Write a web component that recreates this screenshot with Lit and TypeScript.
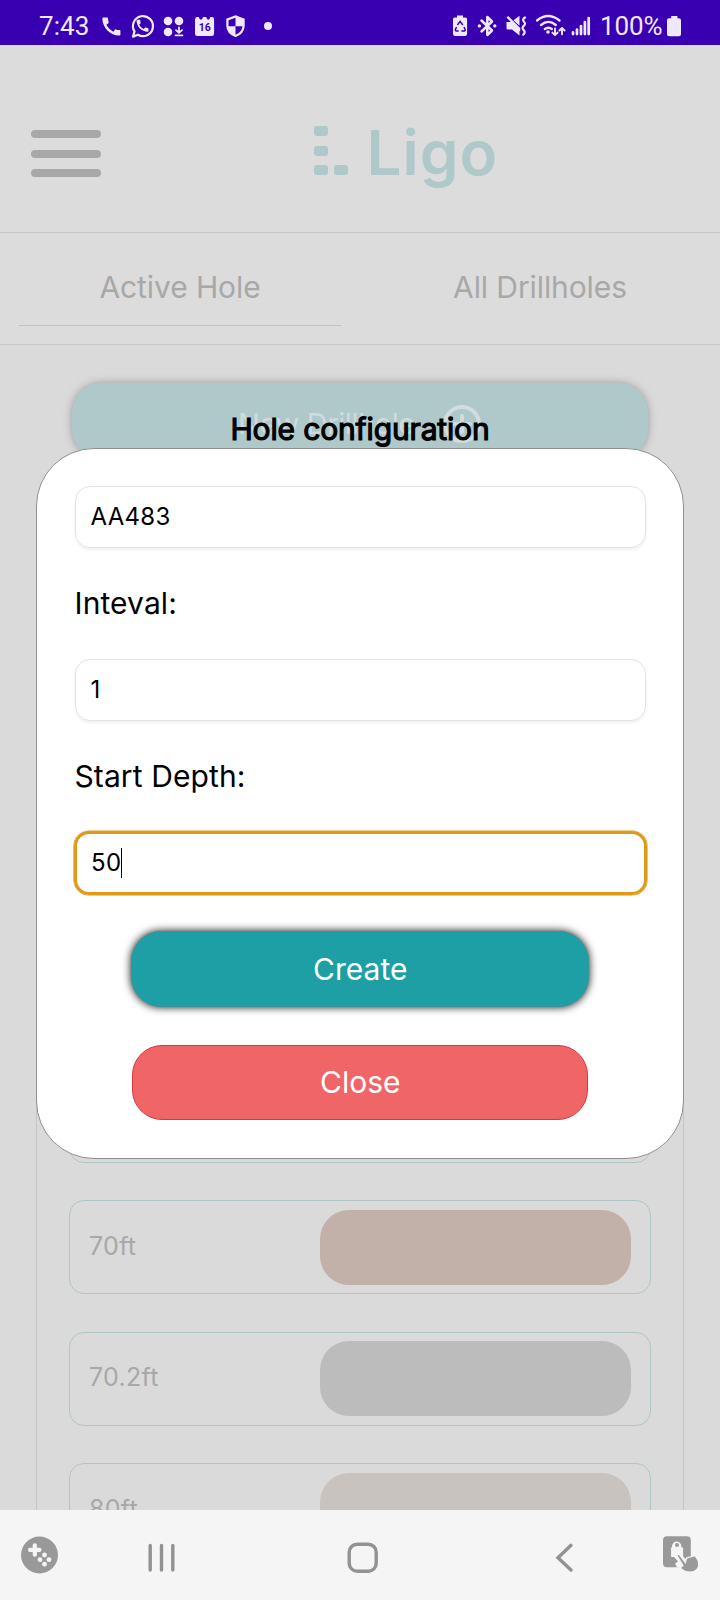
import { LitElement, html, css, svg } from "lit";
import { customElement } from "lit/decorators.js";

const PHONE =
  "M20.01 15.38c-1.23 0-2.42-.2-3.53-.56-.35-.12-.74-.03-1.01.24l-1.57 1.97c-2.83-1.35-5.48-3.9-6.89-6.83l1.95-1.66c.27-.28.35-.67.24-1.02-.37-1.11-.56-2.3-.56-3.53 0-.54-.45-.99-.99-.99H4.19C3.65 3 3 3.24 3 3.99 3 13.28 10.73 21 20.01 21c.71 0 .99-.63.99-1.18v-3.45c0-.54-.45-.99-.99-.99z";

// Every icon is drawn in the coordinates of the bar that holds it.
const glyph = (x: number, width: number, height: number, body: unknown) => html`
  <svg width=${width} height=${height} viewBox="${x} 0 ${width} ${height}">${body}</svg>
`;

@customElement("status-bar")
export class StatusBar extends LitElement {
  static styles = css`
    :host { display: flex; height: 45px; background: #3800b0; color: #f0e8ff; overflow: hidden; }
    svg { display: block; flex: none; fill: #f0e8ff; }
    .line { fill: none; stroke: #f0e8ff; stroke-linecap: round; stroke-linejoin: round; }
    .cut { fill: #3800b0; }
    .cutline { fill: none; stroke: #3800b0; }
    .time, .percent { font: 400 26px/52px Roboto, sans-serif; white-space: nowrap; flex: none; }
    .time { width: 58px; padding-left: 39px; letter-spacing: 0.1px; }
    .percent { width: 66px; padding-left: 2px; letter-spacing: -0.1px; }
    .date { font: 700 10.5px Roboto, sans-serif; fill: #3800b0; }
    .gap { flex: 1; }
  `;
  render() {
    return html`
      <span class="time">7:43</span>
      ${glyph(97, 31, 45, svg`<path transform="translate(99.4 14.6)" d=${PHONE} />`)}
      ${glyph(128, 30, 45, svg`
        <path class="line" stroke-width="2.2" d="M133 36.6l1.5-5.2a10 10 0 1 1 3.4 3.3z" />
        <path transform="translate(134.6 17.8) scale(.66)" d=${PHONE} />`)}
      ${glyph(158, 30, 45, svg`
        <circle cx="168" cy="21" r="4.3" /><circle cx="179" cy="21" r="4.3" /><circle cx="168" cy="32" r="4.3" />
        <path class="line" stroke-width="1.8" d="M179 27.5v5.2m-3-2.6l3 2.8 3-2.8M175.5 35.3h7" />`)}
      ${glyph(188, 34, 45, svg`
        <path d="M195 19.5q0-2.4 2.4-2.4h1.4q.6 2.6 2.1 2.6t2.1-2.6h3.2q.6 2.6 2.1 2.6t2.1-2.6h1.3q2.4 0 2.4 2.4v14.2q0 2.4-2.4 2.4h-14.3q-2.4 0-2.4-2.4z" />
        <text class="date" x="204.8" y="31.3" text-anchor="middle">16</text>`)}
      ${glyph(222, 35, 45, svg`
        <path d="M235.5 15.2l9.2 3.5v7q0 7.800-9.200 11.500-9.200-3.700-9.200-11.500v-7z" />
        <path class="cut" d="M235.500 17.800v8.400h-7v-6zM235.500 26.200h7q-.5 5.800-7 8.600z" />`)}
      ${glyph(257, 22, 45, svg`<circle cx="268" cy="26" r="4" />`)}
      <span class="gap"></span>
      ${glyph(448, 26, 45, svg`
        <path d="M457 15.500h6v2h2.500q1.600 0 1.600 1.600v15q0 1.800-1.800 1.800h-10.500q-1.800 0-1.800-1.800v-15q0-1.600 1.600-1.600h2.400z" />
        <path class="cutline" stroke-width="1.500" d="M457.400 25l2.700-3.600 2.700 3.600M464 27l1.200 2.600q.1 1.300-1.500 1.400h-2.300M458.600 31h-2q-1.600-.3-1.200-1.600l1.200-2.200" />`)}
      ${glyph(474, 26, 45, svg`
        <path class="line" stroke-width="2.500" d="M481.500 20.500l10.500 10-4.700 4.500v-18l4.700 4.500-10.500 10" />
        <circle cx="479.400" cy="25.900" r="1.700" /><circle cx="494.800" cy="25.900" r="1.700" />`)}
      ${glyph(500, 30, 45, svg`
        <path d="M506.500 22h4.500l8.500 8.500v5.100l-7.500-6h-4q-1.500 0-1.500-1.600zM513.500 20.200l6-4.400v10zM506.500 17.500l1.700-1.500 12 12v3.400z" />
        <path class="line" stroke-width="2.200" d="M525 17.500q-3.200 2.200-1 4.200 2.200 2-.3 4.200-2.400 2 0 4.200 2.200 2.200-.5 4.600" />`)}
      ${glyph(530, 38, 45, svg`
        <path class="line" stroke-width="2.300" d="M537 20.500q11-9 22.500 0M541 25q7.500-6.200 14.800 0M544.800 29q3.600-2.600 7 0" />
        <circle cx="548" cy="32" r="1.800" />
        <path class="line" stroke-width="1.900" d="M555 28.500v6.600m-2.600-2.500l2.600 2.600 2.600-2.600M562 34.300v-6m-2.600 2.200l2.600-2.500 2.600 2.500" />`)}
      ${glyph(568, 30, 45, svg`
        <path class="line" stroke-width="2.700" d="M573 32.400v1.700M577 29.500v4.600M581 26v8.100M584.900 22v12.100M588.700 18v16.100" />`)}
      <span class="percent">100%</span>
      ${glyph(666, 54, 45, svg`
        <path d="M671.200 16h6.200v2.200h1.600q2 0 2 2v14q0 2-2 2h-10q-2 0-2-2v-14q0-2 2-2h2.200z" />`)}
    `;
  }
}

@customElement("nav-bar")
export class NavBar extends LitElement {
  static styles = css`
    :host { display: flex; height: 90px; background: #f5f5f5; }
    svg { display: block; flex: none; fill: #999; }
    .hole { fill: #f5f5f5; }
    .line { fill: none; stroke: #929292; stroke-width: 3.4; stroke-linecap: round; }
    .edge { stroke: #f5f5f5; stroke-width: 1.4; }
  `;
  render() {
    return html`
      ${glyph(0, 80, 90, svg`
        <circle cx="39.500" cy="45" r="18.500" />
        <g class="hole">
          <rect x="28" y="37.800" width="13.500" height="4.200" rx="2" /><rect x="32.700" y="33.200" width="4.200" height="13.500" rx="2" />
          <circle cx="44.500" cy="45" r="2.400" /><circle cx="40" cy="49.700" r="2.400" /><circle cx="49" cy="49.700" r="2.400" /><circle cx="44.500" cy="54.200" r="2.400" />
        </g>`)}
      ${glyph(80, 160, 90, svg`<path class="line" d="M150.200 35.500v24.500M161.500 35.500v24.500M172.800 35.500v24.500" />`)}
      ${glyph(240, 230, 90, svg`<rect class="line" x="349.200" y="34.200" width="27" height="27" rx="8" />`)}
      ${glyph(470, 170, 90, svg`<path class="line" d="M571 35.300l-13 12.400 13 12.300" />`)}
      ${glyph(640, 80, 90, svg`
        <rect x="663" y="26.300" width="27.800" height="31" rx="4" />
        <path class="hole" d="M671 37.500h1v-1.200a4.700 4.700 0 0 1 9.400 0v1.200h1.700v9l4 4v7h-10l-2-4 3-2-4-4.500h-3z" />
        <circle cx="677" cy="35" r="2" />
        <path class="edge" d="M676.500 45q1.600-1.600 3.200-.2l5.600 7.600 1.400-4.600q3-1 5-1.200 2.800-1.600 4-.2 3.400 4.200 3.200 8.800-1.200 6.800-8.400 7-6 0-9.800-3.800-.6-1.500 2.200-2.800z" />`)}
    `;
  }
}

@customElement("app-root")
export class AppRoot extends LitElement {
  static styles = css`
    :host { display: flex; flex-direction: column; width: 720px; height: 1600px; font-family: Inter, sans-serif; font-weight: 400; background: #dadada; overflow: hidden; }
    * { box-sizing: border-box; }
    .screen { position: relative; flex: 1; min-height: 0; overflow: hidden; color: #a8a8a8; }
    .header { display: flex; height: 188px; background: #dcdcdc; border-bottom: 1px solid #c7c7c7; padding: 85px 0 0 30.500px; }
    .menu { display: flex; flex-direction: column; gap: 11.500px; width: 70px; height: 47px; }
    .menu i { height: 8px; border-radius: 4px; background: #a8a8a8; }
    .logo { display: flex; margin: -4px 0 0 213.500px; color: #afc8ca; }
    .mark { display: grid; grid-template-columns: 14px 14px; grid-auto-rows: 10px; gap: 9.700px 5.500px; height: 50px; }
    .mark i { background: #afc8ca; border-radius: 3px; }
    .mark i:nth-child(2) { grid-column: 1; }
    .mark i:nth-child(3) { grid-column: 1; }
    .word { margin: -10px 0 0 19px; font: 600 62px/74px Inter, sans-serif; letter-spacing: 1px; }
    .tabs { display: grid; grid-template-columns: 322px 322px; gap: 38px; height: 112px; padding: 18px 19px; background: #dcdcdc; border-bottom: 1px solid #c7c7c7; }
    .tab { height: 75px; border-bottom: 1px solid transparent; text-align: center; font-size: 30px; line-height: 73px; letter-spacing: -0.100px; }
    .tab.on { border-color: #afc8ca; }
    .new { display: flex; justify-content: center; gap: 27px; width: 576px; height: 76px; margin: 38px auto 0; padding-top: 21px; border-radius: 30px; background: #afc8ca; color: #cfdbdc; box-shadow: 0 0 9px #999; font-size: 29px; line-height: 40px; letter-spacing: -0.400px; }
    .new svg { fill: none; stroke: #d3dcdc; stroke-width: 4; stroke-linecap: round; }
    .list { display: flex; flex-direction: column; gap: 37.500px; width: 648px; height: 1100px; margin: 50px auto 0; padding: 559.500px 32px 0; border: 1px solid #c3c5c6; border-top: 0; border-bottom: 0; }
    .row { display: flex; flex: none; justify-content: space-between; align-items: center; height: 94px; padding: 0 19px; border: 1px solid #b0c5c6; border-radius: 15px; font-size: 25px; letter-spacing: 0.300px; }
    .depth { padding-bottom: 3px; }
    .pill { width: 311px; height: 75px; border-radius: 29px; }
    .tan { background: #c1b1a8; }
    .grey { background: #bcbcbc; }
    .sand { background: #c8c3be; }
    .modal { position: absolute; left: 36px; top: 403px; width: 648px; height: 711px; padding: 37px 37px 0 37.500px; border: 1px solid #8f8f8f; border-radius: 58px; background: #fff; color: #000; }
    .title { position: absolute; left: 0; right: 0; top: -42px; margin: 0; text-align: center; font-size: 30px; font-weight: 400; line-height: 44px; letter-spacing: -0.150px; -webkit-text-stroke: 1.200px #000; }
    .field { display: flex; align-items: center; height: 62px; padding: 0 15px 1px; border: 1px solid #dfe3e8; border-radius: 15px; font-size: 24px; letter-spacing: 0.300px; box-shadow: 0 2px 3px rgba(40, 60, 80, 0.08); }
    .field.focus { border: 3px solid #de9a18; height: 64px; margin: -1px -1px 0; padding: 0 14.500px 1px; box-shadow: 0 0 0 0.600px #de9a18; }
    .caret { width: 1px; height: 30px; background: #000; }
    .label { height: 111px; font-size: 30px; line-height: 110px; letter-spacing: 0.100px; }
    .create, .close { width: 458px; margin: 0 auto; text-align: center; color: #fff; font-size: 30px; border-radius: 30px; }
    .create { height: 76px; margin-top: 36px; background: #1d9fa5; border: 1px solid #37969a; line-height: 74px; box-shadow: 0 0 9px 0 #111; }
    .close { width: 456px; height: 75px; margin-top: 38px; line-height: 72px; background: #f06566; border: 1px solid #d5383f; }
  `;
  render() {
    const rows = [["70ft", "tan"], ["70.2ft", "grey"], ["80ft", "sand"]];
    return html`
      <status-bar></status-bar>
      <div class="screen">
        <div class="header">
          <div class="menu"><i></i><i></i><i></i></div>
          <div class="logo"><div class="mark"><i></i><i></i><i></i><i></i></div><span class="word">Ligo</span></div>
        </div>
        <div class="tabs"><div class="tab on">Active Hole</div><div class="tab">All Drillholes</div></div>
        <div class="new">
          <span>New Drillhole</span>
          <svg width="40" height="40" viewBox="0 0 40 40"><circle cx="20" cy="20" r="17" /><path d="M20 12v16M12 20h16" /></svg>
        </div>
        <div class="list">
          <div class="row"></div>
          ${rows.map(([depth, tone]) => html`<div class="row"><span class="depth">${depth}</span><span class="pill ${tone}"></span></div>`)}
        </div>
        <div class="modal">
          <h1 class="title">Hole configuration</h1>
          <div class="field">AA483</div>
          <div class="label">Inteval:</div>
          <div class="field">1</div>
          <div class="label">Start Depth:</div>
          <div class="field focus">50<span class="caret"></span></div>
          <div class="create">Create</div>
          <div class="close">Close</div>
        </div>
      </div>
      <nav-bar></nav-bar>
    `;
  }
}
